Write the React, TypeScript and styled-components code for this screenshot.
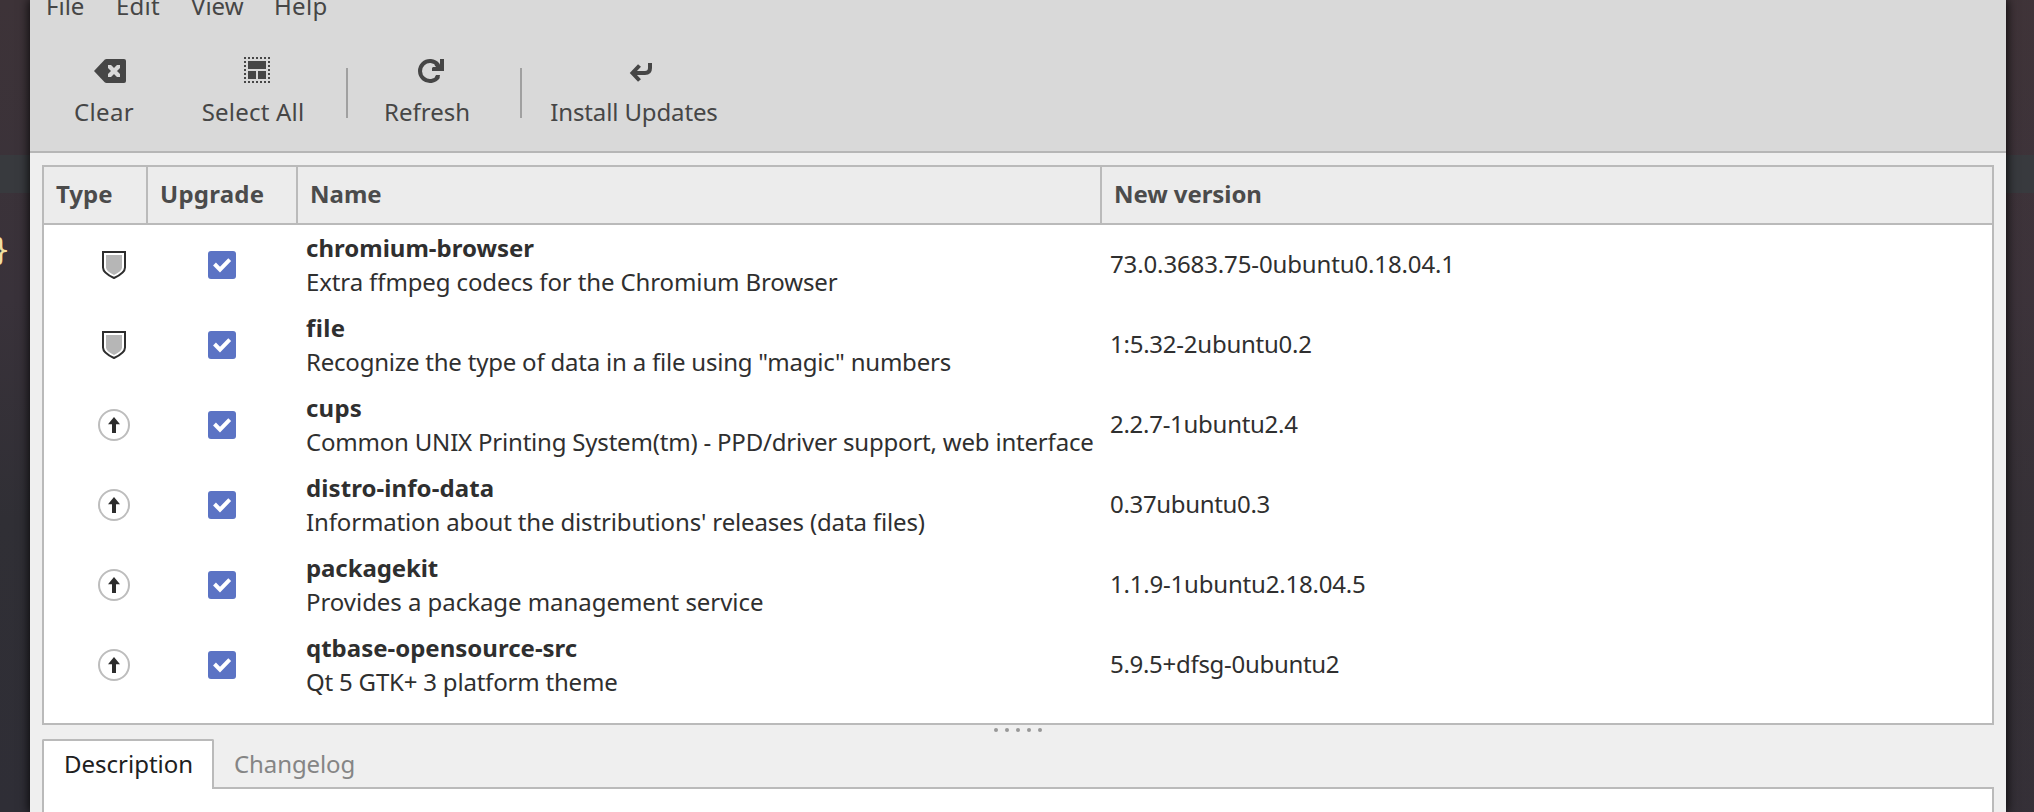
import React from 'react';
import styled, { createGlobalStyle } from 'styled-components';

const GlobalStyle = createGlobalStyle`
  * { box-sizing: border-box; }
  body {
    margin: 0;
    overflow: hidden;
    font: 24px/32px 'Noto Sans', sans-serif;
    color: #2f2f2f;
  }
`;

const Desktop = styled.div`
  position: relative;
  height: 812px;
  display: flex;
  justify-content: space-between;
  background: linear-gradient(90deg, #39323800 0, #39323800 1000px, #44343944 2034px),
    linear-gradient(#3d3338 0, #39323a 300px, #302f35 520px, #2f2e36 100%);
`;

const EditorLine = styled.div`
  position: absolute;
  left: 0;
  right: 0;
  top: 155px;
  height: 38px;
  background: #383a3e;
`;

const Brace = styled.span`
  position: absolute;
  left: -8px;
  top: 234px;
  font: 30px/32px 'DejaVu Sans Mono', monospace;
  color: #f0dfa0;
`;

const Window = styled.main`
  position: relative;
  width: 1976px;
  height: 812px;
  margin-left: 30px;
  display: flex;
  flex-direction: column;
  background: #efefef;
  box-shadow: 0 0 10px 1px rgba(0, 0, 0, 0.85);
`;

const Chrome = styled.header`
  height: 153px;
  flex: none;
  overflow: hidden;
  background: #d9d9d9;
  border-bottom: 2px solid #b6b6b6;
  color: #464646;
`;

const MenuBar = styled.nav`
  display: flex;
  margin-top: -10px;
  padding-left: 16px;
`;

const MenuItem = styled.span<{ $w: number }>`
  width: ${(p) => p.$w}px;
`;

const Toolbar = styled.div`
  display: flex;
  padding-top: 33px;
`;

const ToolButton = styled.div<{ $w: number }>`
  width: ${(p) => p.$w}px;
  display: flex;
  flex-direction: column;
  align-items: center;
  gap: 9px;
  white-space: nowrap;
  svg { display: block; }
`;

const Separator = styled.div<{ $gap: number }>`
  width: 2px;
  height: 50px;
  margin: 13px 0 0 ${(p) => p.$gap}px;
  background: #a0a0a0;
`;

const Fit = styled.span<{ $ls?: number }>`
  letter-spacing: ${(p) => p.$ls ?? 0}px;
  white-space: nowrap;
`;

const Table = styled.section`
  margin: 12px 12px 0;
  height: 560px;
  flex: none;
  border: 2px solid #bababa;
  background: #fff;
`;

const columns = '104px 150px 804px 1fr';

const HeadRow = styled.div`
  display: grid;
  grid-template-columns: ${columns};
  height: 58px;
  background: #ececec;
  border-bottom: 2px solid #bababa;
  color: #4b4b4b;
  font-weight: 700;
`;

const HeadCell = styled.div`
  padding: 11px 0 0 12px;
  border-right: 2px solid #bababa;
  &:last-child { border-right: 0; }
`;

const Row = styled.div`
  display: grid;
  grid-template-columns: ${columns};
  align-items: center;
  height: 80px;
`;

const TypeCell = styled.div`
  padding-left: 54px;
  svg { display: block; }
`;

const CheckCell = styled.div`
  padding-left: 60px;
`;

const CheckBox = styled.div`
  width: 28px;
  height: 28px;
  border-radius: 3px;
  background: #5b73c4;
  svg { display: block; }
`;

const NameCell = styled.div`
  padding-left: 8px;
  line-height: 34px;
`;

const PackageName = styled.div`
  font-weight: 700;
`;

const VersionCell = styled.div`
  padding: 0 0 2px 8px;
`;

const Grip = styled.div`
  display: flex;
  justify-content: center;
  gap: 7px;
  height: 14px;
  padding-top: 3px;
`;

const Dot = styled.i`
  width: 4px;
  height: 4px;
  border-radius: 2px;
  background: #989898;
`;

const Tabs = styled.div`
  display: flex;
  height: 50px;
  flex: none;
  margin: 0 12px;
`;

const Tab = styled.div<{ $active?: boolean }>`
  padding: ${(p) => (p.$active ? 7 : 9)}px 0 0 20px;
  width: 172px;
  flex: ${(p) => (p.$active ? 'none' : '1')};
  color: ${(p) => (p.$active ? '#202020' : '#858585')};
  background: ${(p) => (p.$active ? '#fff' : 'transparent')};
  border: 0 solid #bababa;
  border-width: ${(p) => (p.$active ? '2px 2px 0 2px' : '0 0 2px 0')};
  border-radius: ${(p) => (p.$active ? '2px 2px 0 0' : '0')};
`;

const Panel = styled.div`
  flex: 1;
  margin: 0 12px;
  background: #fff;
  border: solid #bababa;
  border-width: 0 2px;
`;

const ClearIcon = () => (
  <svg width="48" height="32" viewBox="80 55 48 32">
    <path fill="#464646" d="M94 71l10.600-11.200q.8-.8 2-.8H124q2 0 2 2v20q0 2-2 2h-17.400q-1.200 0-2-.8z" />
    <svg x="108" y="65" width="12" height="12" viewBox="0 0 12 12">
      <path d="M-1-1l14 14M13-1l-14 14" stroke="#d9d9d9" strokeWidth="4.300" />
    </svg>
  </svg>
);

const SelectAllIcon = () => (
  <svg width="48" height="32" viewBox="229 55 48 32" fill="#464646">
    <g fill="none" stroke="#464646" strokeWidth="2" strokeDasharray="2 2">
      <path d="M244 58h26M244 82h26M245 57v26M269 57v26" />
    </g>
    <path d="M248 61h18v8h-18zM248 71h8v8h-8zM258 71h8v8h-8z" />
  </svg>
);

const RefreshIcon = () => (
  <svg width="48" height="32" viewBox="403 55 48 32">
    <path d="M438 65A10 10 0 1 0 438.300 76.600" fill="none" stroke="#464646" strokeWidth="4" />
    <path fill="#464646" d="M440 59h4v12h-12v-3l1-1h3l-1.500-2 2.500-3 3 2.500zM436 75h4q0 2-1.500 4l-3.500-2z" />
  </svg>
);

const InstallIcon = () => (
  <svg width="48" height="32" viewBox="610 55 48 32" fill="none" stroke="#464646" strokeWidth="4">
    <path d="M633 73h12q5 0 5-5v-5" />
    <path d="M639.500 65.500l-7 7.500 7 7.500" />
  </svg>
);

const ShieldIcon = () => (
  <svg width="32" height="32" viewBox="0 0 32 32">
    <path d="M5 3h22v15.500q0 5.500-11 10.500q-11-5-11-10.500z" fill="#fff" stroke="#2d2d2d" strokeWidth="2" />
    <path d="M8 6h16v12.500q0 3.500-8 7.500q-8-4-8-7.500z" fill="#b6b6b6" />
  </svg>
);

const UpdateIcon = () => (
  <svg width="32" height="32" viewBox="0 0 32 32">
    <circle cx="16" cy="16" r="15" fill="#fff" stroke="#bdbdbd" strokeWidth="2" />
    <path d="M16 8l6 7.300h-4V24h-4v-8.700h-4z" fill="#2d2d2d" />
  </svg>
);

const CheckMark = () => (
  <svg width="28" height="28" viewBox="0 0 28 28">
    <path d="M6.500 13l5.500 5.700L21.700 8.700" fill="none" stroke="#fff" strokeWidth="4" />
  </svg>
);

// spacing: letter spacing of the name, the description and the version
const packages = [
  { security: true, name: 'chromium-browser', text: 'Extra ffmpeg codecs for the Chromium Browser', version: '73.0.3683.75-0ubuntu0.18.04.1', spacing: [0, -0.12, -0.13] },
  { security: true, name: 'file', text: 'Recognize the type of data in a file using "magic" numbers', version: '1:5.32-2ubuntu0.2', spacing: [0.4, -0.21, -0.24] },
  { security: false, name: 'cups', text: 'Common UNIX Printing System(tm) - PPD/driver support, web interface', version: '2.2.7-1ubuntu2.4', spacing: [0.2, -0.2, -0.28] },
  { security: false, name: 'distro-info-data', text: "Information about the distributions' releases (data files)", version: '0.37ubuntu0.3', spacing: [0.08, -0.15, -0.33] },
  { security: false, name: 'packagekit', text: 'Provides a package management service', version: '1.1.9-1ubuntu2.18.04.5', spacing: [-0.1, -0.05, -0.2] },
  { security: false, name: 'qtbase-opensource-src', text: 'Qt 5 GTK+ 3 platform theme', version: '5.9.5+dfsg-0ubuntu2', spacing: [0, -0.2, -0.3] },
];

export default function App() {
  return (
    <Desktop>
      <GlobalStyle />
      <EditorLine />
      <Brace>{'}'}</Brace>
      <Window>
        <Chrome>
          <MenuBar>
            <MenuItem $w={70}>File</MenuItem>
            <MenuItem $w={75}><Fit $ls={0.2}>Edit</Fit></MenuItem>
            <MenuItem $w={83}>View</MenuItem>
            <MenuItem $w={70}><Fit $ls={0.3}>Help</Fit></MenuItem>
          </MenuBar>
          <Toolbar>
            <ToolButton $w={148}><ClearIcon /><Fit $ls={0.3}>Clear</Fit></ToolButton>
            <ToolButton $w={150}><SelectAllIcon /><Fit $ls={0.2}>Select All</Fit></ToolButton>
            <Separator $gap={18} />
            <ToolButton $w={158}><RefreshIcon /><Fit>Refresh</Fit></ToolButton>
            <Separator $gap={14} />
            <ToolButton $w={224}><InstallIcon /><Fit $ls={-0.13}>Install Updates</Fit></ToolButton>
          </Toolbar>
        </Chrome>
        <Table>
          <HeadRow>
            <HeadCell>Type</HeadCell>
            <HeadCell><Fit $ls={0.25}>Upgrade</Fit></HeadCell>
            <HeadCell>Name</HeadCell>
            <HeadCell><Fit $ls={-0.08}>New version</Fit></HeadCell>
          </HeadRow>
          {packages.map((p) => (
            <Row key={p.name}>
              <TypeCell>{p.security ? <ShieldIcon /> : <UpdateIcon />}</TypeCell>
              <CheckCell><CheckBox><CheckMark /></CheckBox></CheckCell>
              <NameCell>
                <PackageName><Fit $ls={p.spacing[0]}>{p.name}</Fit></PackageName>
                <Fit $ls={p.spacing[1]}>{p.text}</Fit>
              </NameCell>
              <VersionCell><Fit $ls={p.spacing[2]}>{p.version}</Fit></VersionCell>
            </Row>
          ))}
        </Table>
        <Grip><Dot /><Dot /><Dot /><Dot /><Dot /></Grip>
        <Tabs>
          <Tab $active>Description</Tab>
          <Tab><Fit $ls={-0.1}>Changelog</Fit></Tab>
        </Tabs>
        <Panel />
      </Window>
    </Desktop>
  );
}
